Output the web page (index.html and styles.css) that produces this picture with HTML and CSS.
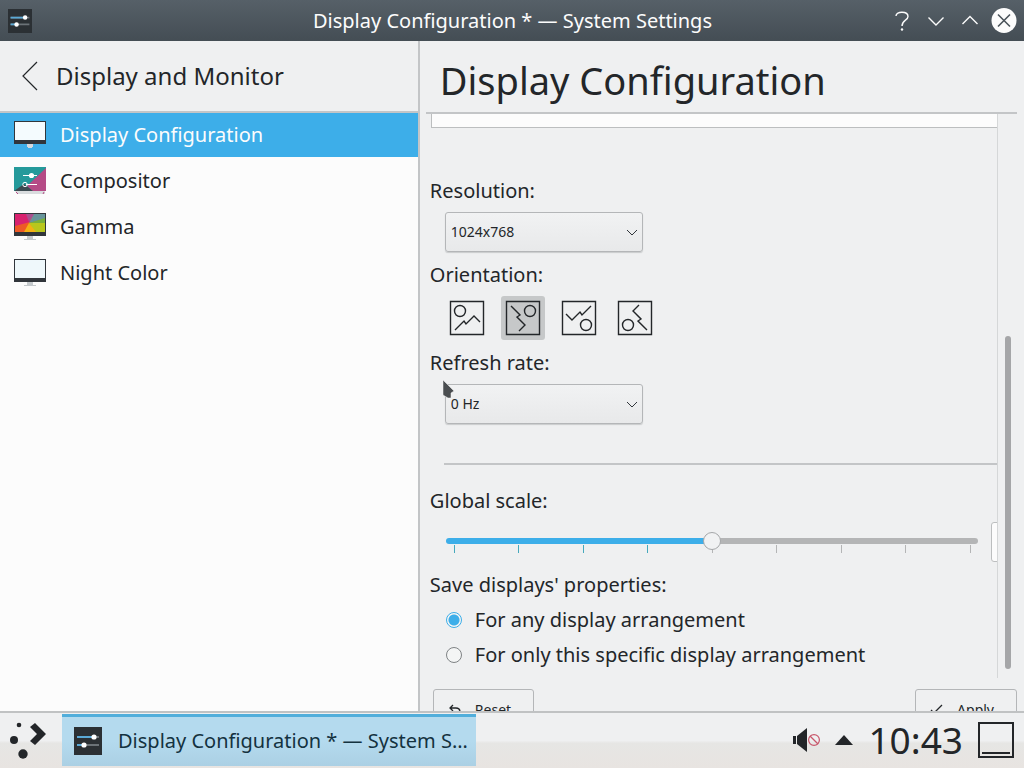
FILE: index.html
```html
<!DOCTYPE html>
<html lang="en">
  <head>
    <meta charset="UTF-8" />
    <meta name="viewport" content="width=device-width, initial-scale=1.0" />
    <title>Display Configuration * — System Settings</title>
    <link rel="stylesheet" href="styles.css">
  </head>
  <body>
    <header class="titlebar">
      <svg class="app-icon" width="24" height="24" viewBox="0 0 28 28">
        <rect width="28" height="28" fill="#2b3034" />
        <path d="M3 10h22M3 18h22" stroke="#6b7277" stroke-width="2" />
        <path d="M3 10h17M3 18h7" stroke="#5aa9d6" stroke-width="2" />
        <circle cx="20" cy="10" r="2.6" fill="#fff" />
        <circle cx="10" cy="18" r="2.6" fill="#fff" />
      </svg>
      <h1>Display Configuration * — System Settings</h1>
      <div class="window-buttons">
        <button aria-label="Help">
          <svg width="26" height="26" viewBox="0 0 26 26" fill="none" stroke="#fcfcfc" stroke-width="1.4">
            <path d="M7 8C7 3 19 3 19 8.500C19 12.500 13 12 13 18" />
            <circle cx="13" cy="21.500" r="1.200" fill="#fcfcfc" stroke="none" />
          </svg>
        </button>
        <button aria-label="Minimize">
          <svg width="26" height="26" viewBox="0 0 26 26" fill="none" stroke="#fcfcfc" stroke-width="1.4"><path d="M5.500 9.500l7.500 7.500l7.500-7.500" /></svg>
        </button>
        <button aria-label="Maximize">
          <svg width="26" height="26" viewBox="0 0 26 26" fill="none" stroke="#fcfcfc" stroke-width="1.4"><path d="M5.500 16l7.500-7.500l7.500 7.500" /></svg>
        </button>
        <button aria-label="Close">
          <svg width="26" height="26" viewBox="0 0 26 26" fill="none">
            <circle cx="13" cy="12.500" r="12.500" fill="#fcfcfc" />
            <path d="M7 6.500l12 12M19 6.500l-12 12" stroke="#4b545b" stroke-width="1.6" />
          </svg>
        </button>
      </div>
    </header>

    <div class="window">
      <nav class="sidebar">
        <button class="back">
          <svg width="18" height="30" viewBox="0 0 18 30" fill="none" stroke="#232629" stroke-width="1.2"><path d="M17 1L3 15l14 14" /></svg>
          Display and Monitor
        </button>
        <ul>
          <li>
            <a href="#display" class="current">
              <svg width="32" height="32" viewBox="0 0 32 32">
                <rect y="2" width="32" height="23" fill="#31363b" />
                <rect x="1" y="3" width="30" height="18" fill="#f4fbfe" />
                <path d="M13 25h6v3h-1v1h-4v-1h-1z" fill="#d5dade" />
              </svg>
              Display Configuration
            </a>
          </li>
          <li>
            <a href="#compositor">
              <svg width="32" height="32" viewBox="0 0 32 32">
                <rect y="2" width="32" height="24" fill="#259a9b" />
                <path d="M32 3v23H18l-5-5z" fill="#b54b86" />
                <path d="M0 26l10-7l9 7z" fill="#3d4b51" />
                <path d="M1 26h30v3H3z" fill="#d9dcde" />
                <path d="M2 27l2 2M30 27l-1 2" stroke="#b54b86" />
                <path d="M9 10.500h14M12 19.500h11" stroke="#fff" />
                <circle cx="17.500" cy="10.500" r="2.600" fill="#fff" />
                <circle cx="11" cy="19.500" r="2.200" fill="none" stroke="#fff" />
              </svg>
              Compositor
            </a>
          </li>
          <li>
            <a href="#gamma">
              <svg width="32" height="32" viewBox="0 0 32 32">
                <rect y="2" width="32" height="23" fill="#31363b" />
                <rect x="1" y="3" width="30" height="18" fill="#ee5a26" />
                <path d="M1 3h15v8L1 15z" fill="#d8226f" />
                <path d="M12 3h9l-6 8z" fill="#a9508f" />
                <path d="M20 3h11v5l-16 4z" fill="#67949a" />
                <path d="M31 7v7l-16-2z" fill="#78b03c" />
                <path d="M31 12v9H20l-5-9z" fill="#b9c71c" />
                <path d="M22 21H10l5-9z" fill="#f4b014" />
                <path d="M13 25h6v3h3v1H10v-1h3z" fill="#c4c9cc" />
              </svg>
              Gamma
            </a>
          </li>
          <li>
            <a href="#night">
              <svg width="32" height="32" viewBox="0 0 32 32">
                <rect y="2" width="32" height="23" fill="#31363b" />
                <rect x="1" y="3" width="30" height="18" fill="#eff8fb" />
                <path d="M13 25h6v3h3v1H10v-1h3z" fill="#c4c9cc" />
              </svg>
              Night Color
            </a>
          </li>
        </ul>
      </nav>

      <main class="module">
        <h2>Display Configuration</h2>
        <div class="scroll-area">
          <form class="settings">
            <div class="preview"></div>

            <label class="caption" for="resolution">Resolution:</label>
            <div class="combo">
              <select id="resolution"><option>1024x768</option></select>
              <svg width="12" height="8" viewBox="0 0 12 8" fill="none" stroke="#31363b"><path d="M1 1l5 5l5-5" /></svg>
            </div>

            <div class="caption" id="orientation">Orientation:</div>
            <div class="orientations" role="group" aria-labelledby="orientation">
              <button type="button" aria-label="Normal">
                <svg width="36" height="36" viewBox="0 0 36 36"><path d="M1.500 1.500h33v33h-33zM6 30l9-9l2 3l8-8l6 6" /><circle cx="11" cy="11" r="5.500" /></svg>
              </button>
              <button type="button" class="checked" aria-label="Rotated clockwise">
                <svg width="36" height="36" viewBox="0 0 36 36"><g transform="rotate(90 18 18)"><path d="M1.500 1.500h33v33h-33zM6 30l9-9l2 3l8-8l6 6" /><circle cx="11" cy="11" r="5.500" /></g></svg>
              </button>
              <button type="button" aria-label="Upside down">
                <svg width="36" height="36" viewBox="0 0 36 36"><g transform="rotate(180 18 18)"><path d="M1.500 1.500h33v33h-33zM6 30l9-9l2 3l8-8l6 6" /><circle cx="11" cy="11" r="5.500" /></g></svg>
              </button>
              <button type="button" aria-label="Rotated counterclockwise">
                <svg width="36" height="36" viewBox="0 0 36 36"><g transform="rotate(270 18 18)"><path d="M1.500 1.500h33v33h-33zM6 30l9-9l2 3l8-8l6 6" /><circle cx="11" cy="11" r="5.500" /></g></svg>
              </button>
            </div>

            <label class="caption" for="refresh">Refresh rate:</label>
            <div class="combo">
              <select id="refresh"><option>0 Hz</option></select>
              <svg width="12" height="8" viewBox="0 0 12 8" fill="none" stroke="#31363b"><path d="M1 1l5 5l5-5" /></svg>
              <svg class="pointer" width="14" height="22" viewBox="0 0 14 22"><path d="M1 1l11 11l-3 2v5H6l-5-3z" fill="#4a4d50" stroke="#f4f4f4" stroke-width="0.500" /></svg>
            </div>

            <hr>

            <label class="caption" for="scale">Global scale:</label>
            <div class="scale">
              <div class="slider">
                <input type="range" id="scale" min="0" max="8" value="4">
                <div class="ticks"><i></i><i></i><i></i><i></i><i></i><i></i><i></i><i></i><i></i></div>
              </div>
              <input type="text" class="scale-value" aria-label="Scale value">
            </div>

            <fieldset>
              <legend class="caption">Save displays' properties:</legend>
              <label><input type="radio" name="save" checked>For any display arrangement</label>
              <label><input type="radio" name="save">For only this specific display arrangement</label>
            </fieldset>
          </form>
          <div class="scrollbar"><div class="handle"></div></div>
        </div>
        <footer class="actions">
          <button>
            <svg width="16" height="16" viewBox="0 0 16 16" fill="none" stroke="#232629" stroke-width="1.3"><path d="M6 3L3 6l3 3M3 6h6c3 0 4 2 4 4s-1 4-4 4" /></svg>
            Reset
          </button>
          <button>
            <svg width="16" height="16" viewBox="0 0 16 16" fill="none" stroke="#232629" stroke-width="1.3"><path d="M2 8l3 3l8-8" /></svg>
            Apply
          </button>
        </footer>
      </main>
    </div>

    <div class="panel">
      <button class="launcher" aria-label="Application launcher">
        <svg width="38" height="40" viewBox="0 0 38 40" fill="#232629">
          <circle cx="10" cy="5" r="2.300" />
          <circle cx="5" cy="20" r="4" />
          <circle cx="14" cy="34" r="4.700" />
          <path d="M21 7l5-4l11 11l-11 11l-5-4l7-7z" />
        </svg>
      </button>
      <button class="task">
        <svg width="28" height="28" viewBox="0 0 28 28">
          <rect width="28" height="28" fill="#2b3034" />
          <path d="M3 10h22M3 18h22" stroke="#6b7277" stroke-width="2" />
          <path d="M3 10h17M3 18h7" stroke="#5aa9d6" stroke-width="2" />
          <circle cx="20" cy="10" r="2.600" fill="#fff" />
          <circle cx="10" cy="18" r="2.600" fill="#fff" />
        </svg>
        <span>Display Configuration * — System Settings</span>
      </button>
      <div class="tray">
        <button aria-label="Volume muted">
          <svg width="28" height="26" viewBox="0 0 28 26">
            <path d="M1 9h3v8H1zM5 9L15 1v24L5 17z" fill="#232629" />
            <g fill="none" stroke="#c8576b" stroke-width="1.200"><circle cx="22" cy="13" r="5.400" /><path d="M18 9l8 8" /></g>
          </svg>
        </button>
        <button aria-label="Show hidden icons">
          <svg width="18" height="10" viewBox="0 0 18 10"><path d="M9 0l9 10H0z" fill="#232629" /></svg>
        </button>
        <time>10:43</time>
        <button aria-label="Show desktop">
          <svg width="36" height="36" viewBox="0 0 36 36" fill="none" stroke="#232629" stroke-width="2"><path d="M1 1h34v34H1zM4 31h28" /></svg>
        </button>
      </div>
    </div>
  </body>
</html>
```

FILE: styles.css
```css
* {
  box-sizing: border-box;
}

body {
  margin: 0;
  height: 100vh;
  display: flex;
  flex-direction: column;
  overflow: hidden;
  background: #eff0f1;
  color: #232629;
  font-family: "Noto Sans", sans-serif;
  font-size: 20px;
  line-height: 28px;
}

button {
  margin: 0;
  padding: 0;
  border: none;
  background: none;
  color: inherit;
  font: inherit;
}

svg {
  display: block;
  flex: none;
}

/* Title bar */
.titlebar {
  display: flex;
  align-items: center;
  height: 41px;
  flex: none;
  padding: 0 7px 0 8px;
  background: linear-gradient(#566068, #444d54);
  color: #fcfcfc;
}

.titlebar h1 {
  flex: 1;
  margin: 0;
  padding-left: 104px;
  font-size: 20px;
  font-weight: normal;
  text-align: center;
}

.window-buttons {
  display: flex;
  gap: 8px;
}

/* Window */
.window {
  display: flex;
  flex: 1;
  min-height: 0;
}

.sidebar {
  width: 41%;
  flex: none;
  background: #fcfcfc;
  border-right: 2px solid #c3c5c7;
}

.back {
  display: flex;
  align-items: center;
  gap: 18px;
  width: 100%;
  height: 72px;
  padding-left: 20px;
  background: #eff0f1;
  border-bottom: 2px solid #c3c5c7;
  font-size: 24px;
}

.sidebar ul {
  margin: 0;
  padding: 0;
  list-style: none;
}

.sidebar a {
  display: flex;
  align-items: center;
  gap: 14px;
  height: 44px;
  margin-bottom: 2px;
  padding-left: 14px;
  color: inherit;
  text-decoration: none;
}

.sidebar a.current {
  background: #3daee9;
  color: #fcfcfc;
}

.module {
  flex: 1;
  min-width: 0;
  display: flex;
  flex-direction: column;
  padding: 0 7px 0 6px;
}

.module h2 {
  flex: none;
  height: 73px;
  margin: 0;
  padding: 0 14px;
  border-bottom: 2px solid #c3c5c7;
  font-size: 38px;
  font-weight: normal;
  line-height: 78px;
}

.scroll-area {
  display: flex;
  flex: 1;
  min-height: 0;
}

.settings {
  flex: 1;
  min-width: 0;
  overflow: hidden;
  padding-left: 4px;
  border-right: 1px solid #d5d7d8;
}

.preview {
  height: 14px;
  margin: 0 0 49px 1px;
  background: #fcfcfc;
  border: 1px solid #bcbebf;
  border-width: 0 0 1px 1px;
}

.caption {
  display: block;
  padding: 0;
}

/* Combo boxes */
.combo {
  position: relative;
  width: 198px;
  margin: 7px 0 9px 15px;
}

.combo select {
  display: block;
  width: 100%;
  height: 40px;
  padding: 0 5px 1px;
  appearance: none;
  border: 1px solid #b4b6b8;
  border-radius: 3px;
  background: linear-gradient(#f1f2f3, #e8e9ea);
  box-shadow: 0 1px 1px #c9cbcc;
  color: inherit;
  font-family: inherit;
  font-size: 14px;
}

.combo svg {
  position: absolute;
  right: 5px;
  top: 17px;
  pointer-events: none;
}

.combo .pointer {
  left: -3px;
  top: -5px;
}

.orientations {
  display: flex;
  gap: 12px;
  margin: 7px 0 9px 15px;
}

.orientations button {
  padding: 4px;
  border-radius: 3px;
}

.orientations .checked {
  background: #c6c8c9;
}

.orientations svg {
  fill: none;
  stroke: #232629;
  stroke-width: 1.4;
}

hr {
  height: 2px;
  margin: 39px 0 22px 14px;
  border: none;
  background: #c3c5c7;
}

/* Scale slider */
.scale {
  display: flex;
  margin: 7px 0 9px 16px;
}

.slider {
  flex: 1;
  padding-top: 10px;
}

.slider input {
  position: relative;
  z-index: 1;
  display: block;
  width: 100%;
  height: 18px;
  margin: 0;
  appearance: none;
  background: none;
}

.slider input::-webkit-slider-runnable-track {
  height: 6px;
  border-radius: 3px;
  background: linear-gradient(90deg, #3daee9 50%, #b4b5b6 50%);
}

.slider input::-webkit-slider-thumb {
  appearance: none;
  width: 18px;
  height: 18px;
  margin-top: -6px;
  border: 1px solid #a5a7a9;
  border-radius: 50%;
  background: #f1f2f3;
}

.ticks {
  display: flex;
  justify-content: space-between;
  margin: -5px 7px 0 8px;
}

.ticks i {
  width: 1px;
  height: 8px;
  background: #b4b5b6;
}

.ticks i:nth-child(-n + 4) {
  background: #46a9bd;
}

/* the field runs past the edge of the view */
.scale-value {
  flex: none;
  width: 110px;
  height: 40px;
  margin: 0 -104px 0 13px;
  border: 1px solid #bcbebf;
  border-radius: 3px;
  background: #fcfcfc;
}

fieldset {
  margin: 0;
  padding: 0;
  border: none;
}

fieldset label {
  display: flex;
  align-items: center;
  gap: 13px;
  height: 28px;
  margin: 7px 0 0 16px;
}

fieldset input {
  width: 16px;
  height: 16px;
  margin: 0;
  appearance: none;
  border: 1px solid #7f8385;
  border-radius: 50%;
  background: #f4f5f5;
}

fieldset input:checked {
  border-color: #3daee9;
  background: radial-gradient(#3daee9 5px, #f4f5f5 6px);
}

.scrollbar {
  display: flex;
  flex-direction: column;
  justify-content: flex-end;
  width: 19px;
  padding: 0 6px 9px 7px;
}

.handle {
  height: 60%;
  border-radius: 3px;
  background: #a5a6a8;
}

/* Footer is partly covered by the panel */
.actions {
  display: flex;
  flex: none;
  justify-content: space-between;
  align-items: flex-start;
  height: 33px;
  padding: 11px 0 0 7px;
  overflow: hidden;
}

.actions button {
  display: flex;
  align-items: center;
  gap: 12px;
  height: 42px;
  padding: 0 22px 0 13px;
  border: 1px solid #b4b6b8;
  border-radius: 3px;
  font-size: 14px;
}

/* Panel */
.panel {
  display: flex;
  align-items: center;
  flex: none;
  height: 57px;
  padding-bottom: 1px;
  border-top: 2px solid #c0c2c3;
  background: linear-gradient(#eff0f1 50%, #e6e6e4 55%, #e8e4e1);
}

.launcher {
  width: 62px;
  padding-left: 9px;
}

.task {
  display: flex;
  align-items: center;
  gap: 16px;
  width: 414px;
  height: 52px;
  padding: 0 8px 2px 12px;
  border-top: 3px solid #51aedb;
  background: linear-gradient(#b4daee 50%, #abd0e4);
  color: #14323f;
}

.task span {
  overflow: hidden;
  text-overflow: ellipsis;
  white-space: nowrap;
}

.tray {
  display: flex;
  align-items: center;
  gap: 15px;
  margin-left: auto;
  padding-right: 10px;
}

.tray time {
  font-size: 37px;
}
```
